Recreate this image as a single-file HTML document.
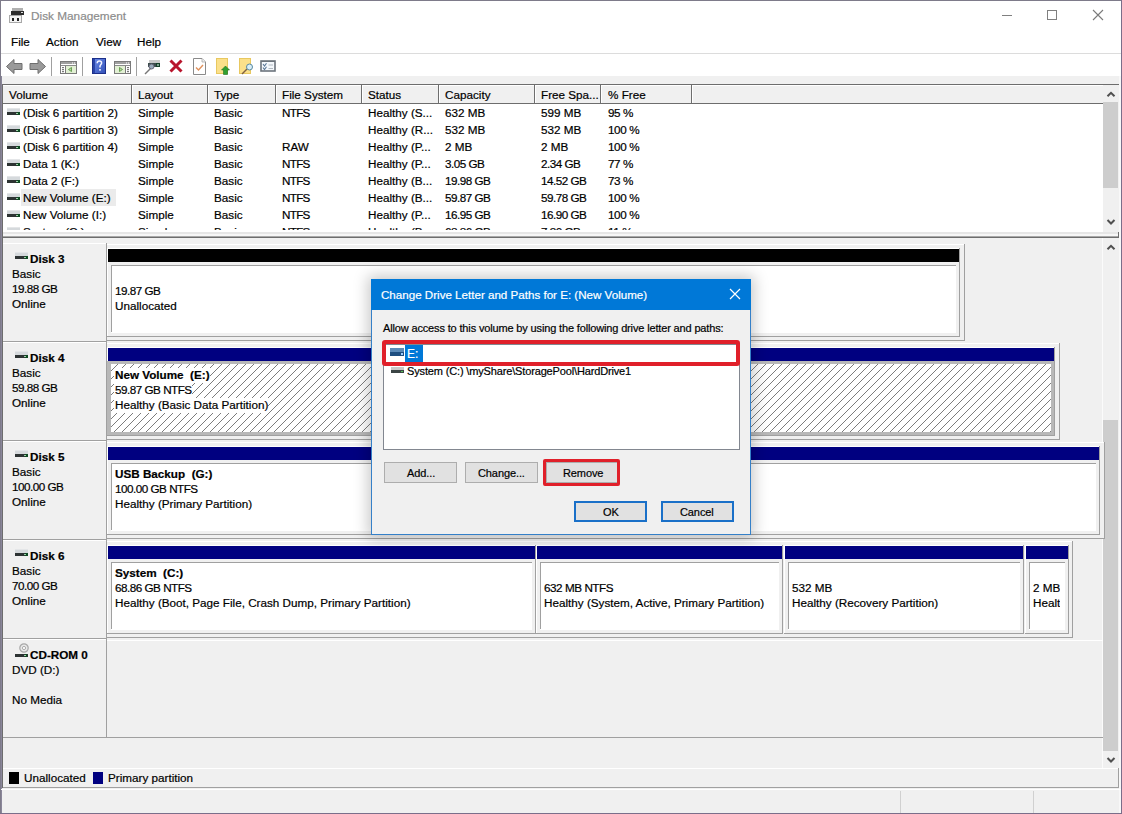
<!DOCTYPE html>
<html><head><meta charset="utf-8"><style>
html,body{margin:0;padding:0;width:1122px;height:814px;overflow:hidden;background:#f0f0f0}
body{position:relative;font-family:"Liberation Sans",sans-serif}
.r{position:absolute;display:block}
.t{position:absolute;white-space:pre;line-height:1;font-family:"Liberation Sans",sans-serif;-webkit-text-stroke:0.2px currentColor}
.hatch{background-color:#fff;background-image:repeating-linear-gradient(-45deg,transparent 0,transparent 4.8px,#6a6a6a 4.8px,#6a6a6a 5.8px)}
</style></head><body>
<div class="r" style="left:0px;top:0px;width:1122px;height:814px;background:#f0f0f0;"></div>
<div class="r" style="left:1px;top:1px;width:1120px;height:75px;background:#ffffff;"></div>
<div class="r" style="left:1px;top:53px;width:1120px;height:1px;background:#dcdcdc;"></div>
<div class="r" style="left:0px;top:0px;width:1122px;height:1px;background:#7e7b8a;"></div>
<div class="r" style="left:0px;top:0px;width:1px;height:814px;background:#7e7b8a;"></div>
<div class="r" style="left:1px;top:76px;width:1px;height:738px;background:#8a869a;"></div>
<div class="r" style="left:1121px;top:0px;width:1px;height:814px;background:#7a6e8a;"></div>
<div class="r" style="left:0px;top:813px;width:1122px;height:1px;background:#7a6e8a;"></div>
<svg class="r" style="left:9px;top:8px" width="16" height="15" viewBox="0 0 16 15">
<rect x="3" y="0" width="11" height="3" fill="#b0b0b0"/>
<rect x="2" y="3" width="13" height="4" fill="#2c2c2c"/>
<rect x="12" y="4" width="2" height="1" fill="#e0e0e0"/>
<rect x="0" y="7" width="13" height="8" fill="#a8a8a8"/>
<rect x="1" y="8" width="11" height="6" fill="#f4f4f4"/>
<rect x="3" y="10" width="2" height="3" fill="#222"/>
<rect x="8" y="10" width="2" height="3" fill="#222"/>
</svg>
<div class="t" style="left:31px;top:10.61px;font-size:11.8px;color:#8c8c8c;">Disk Management</div>
<div class="r" style="left:1002px;top:15px;width:10px;height:1px;background:#808080;"></div>
<div class="r" style="left:1047px;top:10px;width:8px;height:8px;background:transparent;border:1px solid #808080"></div>
<svg class="r" style="left:1092px;top:9px" width="12" height="12" viewBox="0 0 12 12"><path d="M1 1L11 11M11 1L1 11" stroke="#7a7a7a" stroke-width="1.1"/></svg>
<div class="t" style="left:11px;top:36.10px;font-size:11.7px;color:#000;">File</div>
<div class="t" style="left:46px;top:36.10px;font-size:11.7px;color:#000;">Action</div>
<div class="t" style="left:96px;top:36.10px;font-size:11.7px;color:#000;">View</div>
<div class="t" style="left:137px;top:36.10px;font-size:11.7px;color:#000;">Help</div>
<svg class="r" style="left:5px;top:58px" width="42" height="17" viewBox="0 0 42 17">
<path d="M1.5 8.5L9 1.5V5.5H17V11.5H9V15.5Z" fill="#9a9a9a" stroke="#6e6e6e" stroke-width="1"/>
<path d="M40.5 8.5L33 1.5V5.5H25V11.5H33V15.5Z" fill="#9a9a9a" stroke="#6e6e6e" stroke-width="1"/>
</svg>
<div class="r" style="left:51px;top:57px;width:1px;height:19px;background:#a0a0a0;"></div>
<div class="r" style="left:82px;top:57px;width:1px;height:19px;background:#a0a0a0;"></div>
<div class="r" style="left:136px;top:57px;width:1px;height:19px;background:#a0a0a0;"></div>
<svg class="r" style="left:60px;top:61px" width="17" height="13" viewBox="0 0 17 13">
<rect x="0.5" y="0.5" width="16" height="12" fill="#fff" stroke="#7a7a7a"/>
<rect x="1" y="1" width="15" height="2" fill="#a0a0a0"/>
<rect x="12" y="1.5" width="1" height="1" fill="#fff"/><rect x="14" y="1.5" width="1" height="1" fill="#fff"/>
<line x1="1" y1="4.5" x2="16" y2="4.5" stroke="#8a8a8a"/>
<rect x="1" y="5" width="4" height="7" fill="#fff"/><line x1="5.5" y1="5" x2="5.5" y2="12" stroke="#7a7a7a"/><rect x="2" y="6" width="2" height="1.2" fill="#7a7a7a"/><rect x="2" y="8" width="2" height="1.2" fill="#7a7a7a"/><rect x="2" y="10" width="2" height="1.2" fill="#7a7a7a"/><rect x="6" y="5" width="10" height="7" fill="#e2f0d4"/><path d="M11.5 6.5L8.5 8.5L11.5 10.5Z" fill="#b8d8a0" stroke="#5f9848" stroke-width="0.9"/>
</svg>
<svg class="r" style="left:92px;top:58px" width="14" height="16" viewBox="0 0 14 16">
<defs><linearGradient id="hg" x1="0" y1="0" x2="1" y2="1"><stop offset="0" stop-color="#6a8ae8"/><stop offset="1" stop-color="#3452b8"/></linearGradient></defs>
<rect x="0" y="0" width="14" height="16" fill="#1c2f8a"/>
<rect x="1" y="1" width="12" height="14" fill="url(#hg)"/>
<rect x="1" y="1" width="2" height="14" fill="#2a44a8"/>
<path d="M5.2 5.2C5.2 3.6 6.2 3 7.4 3C8.7 3 9.6 3.8 9.6 5C9.6 6.4 8 6.8 8 8.6V9.6" stroke="#f4f4ff" stroke-width="1.5" fill="none"/>
<rect x="7.2" y="11" width="1.6" height="1.7" fill="#f4f4ff"/>
</svg>
<svg class="r" style="left:114px;top:61px" width="17" height="13" viewBox="0 0 17 13">
<rect x="0.5" y="0.5" width="16" height="12" fill="#fff" stroke="#7a7a7a"/>
<rect x="1" y="1" width="15" height="2" fill="#a0a0a0"/>
<rect x="12" y="1.5" width="1" height="1" fill="#fff"/><rect x="14" y="1.5" width="1" height="1" fill="#fff"/>
<line x1="1" y1="4.5" x2="16" y2="4.5" stroke="#8a8a8a"/>
<rect x="12" y="5" width="4" height="7" fill="#fff"/><line x1="11.5" y1="5" x2="11.5" y2="12" stroke="#7a7a7a"/><rect x="13" y="6" width="2" height="1.2" fill="#7a7a7a"/><rect x="13" y="8" width="2" height="1.2" fill="#7a7a7a"/><rect x="13" y="10" width="2" height="1.2" fill="#7a7a7a"/><rect x="1" y="5" width="10" height="7" fill="#e2f0d4"/><path d="M5.5 6.5L8.5 8.5L5.5 10.5Z" fill="#b8d8a0" stroke="#5f9848" stroke-width="0.9"/>
</svg>
<svg class="r" style="left:144px;top:59px" width="17" height="16" viewBox="0 0 17 16">
<rect x="5" y="1" width="11" height="3" fill="#c8c8c8"/>
<rect x="4" y="4" width="12" height="4" fill="#3c4c4c"/>
<rect x="12" y="4" width="4" height="4" fill="#17402a"/><rect x="13" y="5.5" width="2" height="1" fill="#dfe"/>
<path d="M1 15L7 9" stroke="#777" stroke-width="1.5"/>
<circle cx="7.5" cy="7.5" r="2.5" fill="#9ab" stroke="#667" stroke-width="1"/>
</svg>
<svg class="r" style="left:168px;top:58px" width="16" height="16" viewBox="0 0 16 16">
<path d="M2.5 2.5L13.5 13.5M13.5 2.5L2.5 13.5" stroke="#b8142c" stroke-width="3"/>
</svg>
<svg class="r" style="left:193px;top:58px" width="13" height="17" viewBox="0 0 13 17">
<path d="M0.5 0.5H9L12.5 4V16.5H0.5Z" fill="#fff" stroke="#8a8a8a"/><path d="M9 0.5V4H12.5" fill="#eee" stroke="#aaa" stroke-width="0.8"/>
<path d="M3 9.5L5.5 12L10 7" stroke="#e0925e" stroke-width="1.4" fill="none"/>
</svg>
<svg class="r" style="left:216px;top:58px" width="14" height="17" viewBox="0 0 14 17">
<rect x="0" y="0" width="12" height="16" fill="#e8c860"/>
<rect x="1" y="1" width="10" height="14" fill="#fbe08a"/>
<path d="M7.5 16.5V12H5.5L9.5 8L13.5 12H11.5V16.5Z" fill="#30a030" stroke="#207020" stroke-width="0.6"/>
</svg>
<svg class="r" style="left:239px;top:58px" width="15" height="17" viewBox="0 0 15 17">
<rect x="0" y="0" width="12" height="16" fill="#e8c860"/>
<rect x="1" y="1" width="10" height="14" fill="#fbe08a"/>
<path d="M3 16L8 11" stroke="#806040" stroke-width="1.5"/>
<circle cx="10.5" cy="9" r="3" fill="#d8eef8" stroke="#5a8aa0" stroke-width="1"/>
</svg>
<svg class="r" style="left:260px;top:60px" width="16" height="12" viewBox="0 0 16 12">
<rect x="1" y="1" width="14" height="10" fill="#f4f8fc" stroke="#6c747c" stroke-width="1.6"/>
<rect x="1" y="1" width="14" height="1" fill="#6c747c"/>
<path d="M3 4L4.5 6L6.5 3.2M3 7.5L4.5 9.5L6.5 6.7" stroke="#5a7898" stroke-width="1.1" fill="none"/>
<rect x="8.5" y="4.5" width="4.5" height="1" fill="#b0b8c0"/><rect x="8.5" y="8" width="4.5" height="1" fill="#b0b8c0"/>
</svg>
<div class="r" style="left:2px;top:84px;width:1118px;height:1px;background:#6d6d6d;"></div>
<div class="r" style="left:2px;top:84px;width:1px;height:153px;background:#6d6d6d;"></div>
<div class="r" style="left:3px;top:85px;width:1100px;height:147px;background:#ffffff;"></div>
<div class="r" style="left:3px;top:85px;width:1100px;height:18px;background:#f0f0f0;"></div>
<div class="r" style="left:3px;top:103px;width:1100px;height:1px;background:#6d6d6d;"></div>
<div class="r" style="left:3px;top:85px;width:1100px;height:1px;background:#ffffff;"></div>
<div class="r" style="left:131px;top:85px;width:1px;height:18px;background:#6e6e6e;"></div>
<div class="r" style="left:132px;top:86px;width:1px;height:17px;background:#ffffff;"></div>
<div class="r" style="left:207px;top:85px;width:1px;height:18px;background:#6e6e6e;"></div>
<div class="r" style="left:208px;top:86px;width:1px;height:17px;background:#ffffff;"></div>
<div class="r" style="left:275px;top:85px;width:1px;height:18px;background:#6e6e6e;"></div>
<div class="r" style="left:276px;top:86px;width:1px;height:17px;background:#ffffff;"></div>
<div class="r" style="left:361px;top:85px;width:1px;height:18px;background:#6e6e6e;"></div>
<div class="r" style="left:362px;top:86px;width:1px;height:17px;background:#ffffff;"></div>
<div class="r" style="left:438px;top:85px;width:1px;height:18px;background:#6e6e6e;"></div>
<div class="r" style="left:439px;top:86px;width:1px;height:17px;background:#ffffff;"></div>
<div class="r" style="left:534px;top:85px;width:1px;height:18px;background:#6e6e6e;"></div>
<div class="r" style="left:535px;top:86px;width:1px;height:17px;background:#ffffff;"></div>
<div class="r" style="left:600px;top:85px;width:1px;height:18px;background:#6e6e6e;"></div>
<div class="r" style="left:601px;top:86px;width:1px;height:17px;background:#ffffff;"></div>
<div class="r" style="left:691px;top:85px;width:1px;height:18px;background:#6e6e6e;"></div>
<div class="r" style="left:692px;top:86px;width:1px;height:17px;background:#ffffff;"></div>
<div class="t" style="left:9px;top:89.10px;font-size:11.7px;color:#000;">Volume</div>
<div class="t" style="left:138px;top:89.10px;font-size:11.7px;color:#000;">Layout</div>
<div class="t" style="left:214px;top:89.10px;font-size:11.7px;color:#000;">Type</div>
<div class="t" style="left:282px;top:89.10px;font-size:11.7px;color:#000;">File System</div>
<div class="t" style="left:368px;top:89.10px;font-size:11.7px;color:#000;">Status</div>
<div class="t" style="left:445px;top:89.10px;font-size:11.7px;color:#000;">Capacity</div>
<div class="t" style="left:541px;top:89.10px;font-size:11.7px;color:#000;">Free Spa...</div>
<div class="t" style="left:608px;top:89.10px;font-size:11.7px;color:#000;">% Free</div>
<div class="r" style="left:3px;top:104px;width:1100px;height:126px;overflow:hidden">
<svg class="r" style="left:4px;top:4px" width="13" height="7" viewBox="0 0 13 7"><rect x="0" y="0" width="13" height="4" fill="#d5d9dc"/><rect x="0" y="0" width="13" height="1" fill="#e4e6e8"/><rect x="0" y="4" width="13" height="3" fill="#2d3333"/><rect x="10" y="4" width="3" height="3" fill="#0e4a22"/><rect x="9" y="5" width="2" height="1" fill="#9ad4a8"/></svg>
<div class="t" style="left:20px;top:3.10px;font-size:11.7px;color:#000;">(Disk 6 partition 2)</div>
<div class="t" style="left:135px;top:3.10px;font-size:11.7px;color:#000;">Simple</div>
<div class="t" style="left:211px;top:3.10px;font-size:11.7px;color:#000;">Basic</div>
<div class="t" style="left:279px;top:3.10px;font-size:11.7px;color:#000;letter-spacing:-0.7px;">NTFS</div>
<div class="t" style="left:365px;top:3.10px;font-size:11.7px;color:#000;">Healthy (S...</div>
<div class="t" style="left:442px;top:3.10px;font-size:11.7px;color:#000;">632 MB</div>
<div class="t" style="left:538px;top:3.10px;font-size:11.7px;color:#000;">599 MB</div>
<div class="t" style="left:605px;top:3.10px;font-size:11.7px;color:#000;letter-spacing:-0.4px;">95 %</div>
<svg class="r" style="left:4px;top:21px" width="13" height="7" viewBox="0 0 13 7"><rect x="0" y="0" width="13" height="4" fill="#d5d9dc"/><rect x="0" y="0" width="13" height="1" fill="#e4e6e8"/><rect x="0" y="4" width="13" height="3" fill="#2d3333"/><rect x="10" y="4" width="3" height="3" fill="#0e4a22"/><rect x="9" y="5" width="2" height="1" fill="#9ad4a8"/></svg>
<div class="t" style="left:20px;top:20.10px;font-size:11.7px;color:#000;">(Disk 6 partition 3)</div>
<div class="t" style="left:135px;top:20.10px;font-size:11.7px;color:#000;">Simple</div>
<div class="t" style="left:211px;top:20.10px;font-size:11.7px;color:#000;">Basic</div>
<div class="t" style="left:279px;top:20.10px;font-size:11.7px;color:#000;"></div>
<div class="t" style="left:365px;top:20.10px;font-size:11.7px;color:#000;">Healthy (R...</div>
<div class="t" style="left:442px;top:20.10px;font-size:11.7px;color:#000;">532 MB</div>
<div class="t" style="left:538px;top:20.10px;font-size:11.7px;color:#000;">532 MB</div>
<div class="t" style="left:605px;top:20.10px;font-size:11.7px;color:#000;letter-spacing:-0.4px;">100 %</div>
<svg class="r" style="left:4px;top:38px" width="13" height="7" viewBox="0 0 13 7"><rect x="0" y="0" width="13" height="4" fill="#d5d9dc"/><rect x="0" y="0" width="13" height="1" fill="#e4e6e8"/><rect x="0" y="4" width="13" height="3" fill="#2d3333"/><rect x="10" y="4" width="3" height="3" fill="#0e4a22"/><rect x="9" y="5" width="2" height="1" fill="#9ad4a8"/></svg>
<div class="t" style="left:20px;top:37.10px;font-size:11.7px;color:#000;">(Disk 6 partition 4)</div>
<div class="t" style="left:135px;top:37.10px;font-size:11.7px;color:#000;">Simple</div>
<div class="t" style="left:211px;top:37.10px;font-size:11.7px;color:#000;">Basic</div>
<div class="t" style="left:279px;top:37.10px;font-size:11.7px;color:#000;">RAW</div>
<div class="t" style="left:365px;top:37.10px;font-size:11.7px;color:#000;">Healthy (P...</div>
<div class="t" style="left:442px;top:37.10px;font-size:11.7px;color:#000;">2 MB</div>
<div class="t" style="left:538px;top:37.10px;font-size:11.7px;color:#000;">2 MB</div>
<div class="t" style="left:605px;top:37.10px;font-size:11.7px;color:#000;letter-spacing:-0.4px;">100 %</div>
<svg class="r" style="left:4px;top:55px" width="13" height="7" viewBox="0 0 13 7"><rect x="0" y="0" width="13" height="4" fill="#d5d9dc"/><rect x="0" y="0" width="13" height="1" fill="#e4e6e8"/><rect x="0" y="4" width="13" height="3" fill="#2d3333"/><rect x="10" y="4" width="3" height="3" fill="#0e4a22"/><rect x="9" y="5" width="2" height="1" fill="#9ad4a8"/></svg>
<div class="t" style="left:20px;top:54.10px;font-size:11.7px;color:#000;">Data 1 (K:)</div>
<div class="t" style="left:135px;top:54.10px;font-size:11.7px;color:#000;">Simple</div>
<div class="t" style="left:211px;top:54.10px;font-size:11.7px;color:#000;">Basic</div>
<div class="t" style="left:279px;top:54.10px;font-size:11.7px;color:#000;letter-spacing:-0.7px;">NTFS</div>
<div class="t" style="left:365px;top:54.10px;font-size:11.7px;color:#000;">Healthy (P...</div>
<div class="t" style="left:442px;top:54.10px;font-size:11.7px;color:#000;letter-spacing:-0.5px;">3.05 GB</div>
<div class="t" style="left:538px;top:54.10px;font-size:11.7px;color:#000;letter-spacing:-0.5px;">2.34 GB</div>
<div class="t" style="left:605px;top:54.10px;font-size:11.7px;color:#000;letter-spacing:-0.4px;">77 %</div>
<svg class="r" style="left:4px;top:72px" width="13" height="7" viewBox="0 0 13 7"><rect x="0" y="0" width="13" height="4" fill="#d5d9dc"/><rect x="0" y="0" width="13" height="1" fill="#e4e6e8"/><rect x="0" y="4" width="13" height="3" fill="#2d3333"/><rect x="10" y="4" width="3" height="3" fill="#0e4a22"/><rect x="9" y="5" width="2" height="1" fill="#9ad4a8"/></svg>
<div class="t" style="left:20px;top:71.10px;font-size:11.7px;color:#000;">Data 2 (F:)</div>
<div class="t" style="left:135px;top:71.10px;font-size:11.7px;color:#000;">Simple</div>
<div class="t" style="left:211px;top:71.10px;font-size:11.7px;color:#000;">Basic</div>
<div class="t" style="left:279px;top:71.10px;font-size:11.7px;color:#000;letter-spacing:-0.7px;">NTFS</div>
<div class="t" style="left:365px;top:71.10px;font-size:11.7px;color:#000;">Healthy (B...</div>
<div class="t" style="left:442px;top:71.10px;font-size:11.7px;color:#000;letter-spacing:-0.5px;">19.98 GB</div>
<div class="t" style="left:538px;top:71.10px;font-size:11.7px;color:#000;letter-spacing:-0.5px;">14.52 GB</div>
<div class="t" style="left:605px;top:71.10px;font-size:11.7px;color:#000;letter-spacing:-0.4px;">73 %</div>
<div class="r" style="left:18px;top:85px;width:95px;height:17px;background:#ebebeb;"></div>
<svg class="r" style="left:4px;top:89px" width="13" height="7" viewBox="0 0 13 7"><rect x="0" y="0" width="13" height="4" fill="#d5d9dc"/><rect x="0" y="0" width="13" height="1" fill="#e4e6e8"/><rect x="0" y="4" width="13" height="3" fill="#2d3333"/><rect x="10" y="4" width="3" height="3" fill="#0e4a22"/><rect x="9" y="5" width="2" height="1" fill="#9ad4a8"/></svg>
<div class="t" style="left:20px;top:88.10px;font-size:11.7px;color:#000;">New Volume (E:)</div>
<div class="t" style="left:135px;top:88.10px;font-size:11.7px;color:#000;">Simple</div>
<div class="t" style="left:211px;top:88.10px;font-size:11.7px;color:#000;">Basic</div>
<div class="t" style="left:279px;top:88.10px;font-size:11.7px;color:#000;letter-spacing:-0.7px;">NTFS</div>
<div class="t" style="left:365px;top:88.10px;font-size:11.7px;color:#000;">Healthy (B...</div>
<div class="t" style="left:442px;top:88.10px;font-size:11.7px;color:#000;letter-spacing:-0.5px;">59.87 GB</div>
<div class="t" style="left:538px;top:88.10px;font-size:11.7px;color:#000;letter-spacing:-0.5px;">59.78 GB</div>
<div class="t" style="left:605px;top:88.10px;font-size:11.7px;color:#000;letter-spacing:-0.4px;">100 %</div>
<svg class="r" style="left:4px;top:106px" width="13" height="7" viewBox="0 0 13 7"><rect x="0" y="0" width="13" height="4" fill="#d5d9dc"/><rect x="0" y="0" width="13" height="1" fill="#e4e6e8"/><rect x="0" y="4" width="13" height="3" fill="#2d3333"/><rect x="10" y="4" width="3" height="3" fill="#0e4a22"/><rect x="9" y="5" width="2" height="1" fill="#9ad4a8"/></svg>
<div class="t" style="left:20px;top:105.10px;font-size:11.7px;color:#000;">New Volume (I:)</div>
<div class="t" style="left:135px;top:105.10px;font-size:11.7px;color:#000;">Simple</div>
<div class="t" style="left:211px;top:105.10px;font-size:11.7px;color:#000;">Basic</div>
<div class="t" style="left:279px;top:105.10px;font-size:11.7px;color:#000;letter-spacing:-0.7px;">NTFS</div>
<div class="t" style="left:365px;top:105.10px;font-size:11.7px;color:#000;">Healthy (P...</div>
<div class="t" style="left:442px;top:105.10px;font-size:11.7px;color:#000;letter-spacing:-0.5px;">16.95 GB</div>
<div class="t" style="left:538px;top:105.10px;font-size:11.7px;color:#000;letter-spacing:-0.5px;">16.90 GB</div>
<div class="t" style="left:605px;top:105.10px;font-size:11.7px;color:#000;letter-spacing:-0.4px;">100 %</div>
<svg class="r" style="left:4px;top:123px" width="13" height="7" viewBox="0 0 13 7"><rect x="0" y="0" width="13" height="4" fill="#d5d9dc"/><rect x="0" y="0" width="13" height="1" fill="#e4e6e8"/><rect x="0" y="4" width="13" height="3" fill="#2d3333"/><rect x="10" y="4" width="3" height="3" fill="#0e4a22"/><rect x="9" y="5" width="2" height="1" fill="#9ad4a8"/></svg>
<div class="t" style="left:20px;top:122.10px;font-size:11.7px;color:#000;">System (C:)</div>
<div class="t" style="left:135px;top:122.10px;font-size:11.7px;color:#000;">Simple</div>
<div class="t" style="left:211px;top:122.10px;font-size:11.7px;color:#000;">Basic</div>
<div class="t" style="left:279px;top:122.10px;font-size:11.7px;color:#000;letter-spacing:-0.7px;">NTFS</div>
<div class="t" style="left:365px;top:122.10px;font-size:11.7px;color:#000;">Healthy (B...</div>
<div class="t" style="left:442px;top:122.10px;font-size:11.7px;color:#000;letter-spacing:-0.5px;">68.86 GB</div>
<div class="t" style="left:538px;top:122.10px;font-size:11.7px;color:#000;letter-spacing:-0.5px;">7.30 GB</div>
<div class="t" style="left:605px;top:122.10px;font-size:11.7px;color:#000;letter-spacing:-0.4px;">11 %</div>
</div>
<div class="r" style="left:1103px;top:85px;width:16px;height:147px;background:#f0f0f0;"></div>
<div class="r" style="left:1103px;top:102px;width:15px;height:86px;background:#cdcdcd;"></div>
<svg class="r" style="left:1106px;top:90px" width="10" height="8" viewBox="0 0 10 8"><path d="M1.5 6.3L5 2.8L8.5 6.3" stroke="#505050" stroke-width="2" fill="none"/></svg>
<svg class="r" style="left:1106px;top:218px" width="10" height="8" viewBox="0 0 10 8"><path d="M1.5 2L5 5.5L8.5 2" stroke="#505050" stroke-width="2" fill="none"/></svg>
<div class="r" style="left:3px;top:232px;width:1116px;height:2px;background:#e6e6e6;"></div>
<div class="r" style="left:3px;top:234px;width:1116px;height:2px;background:#f6f6f6;"></div>
<div class="r" style="left:3px;top:236px;width:1116px;height:1px;background:#a8a8a8;"></div>
<div class="r" style="left:1118px;top:232px;width:1px;height:5px;background:#6d6d6d;"></div>
<div class="r" style="left:2px;top:237px;width:1118px;height:1px;background:#6d6d6d;"></div>
<div class="r" style="left:2px;top:237px;width:1px;height:551px;background:#6d6d6d;"></div>
<div class="r" style="left:1103px;top:238px;width:16px;height:530px;background:#f0f0f0;"></div>
<div class="r" style="left:1102px;top:238px;width:1px;height:530px;background:#fbfbfb;"></div>
<div class="r" style="left:1119px;top:76px;width:2px;height:737px;background:#f8f8f8;"></div>
<div class="r" style="left:1103px;top:420px;width:15px;height:331px;background:#cdcdcd;"></div>
<svg class="r" style="left:1106px;top:243px" width="10" height="8" viewBox="0 0 10 8"><path d="M1.5 6.3L5 2.8L8.5 6.3" stroke="#505050" stroke-width="2" fill="none"/></svg>
<svg class="r" style="left:1106px;top:756px" width="10" height="8" viewBox="0 0 10 8"><path d="M1.5 2L5 5.5L8.5 2" stroke="#505050" stroke-width="2" fill="none"/></svg>
<div class="r" style="left:3px;top:243px;width:103px;height:1px;background:#ffffff;"></div>
<div class="r" style="left:3px;top:341px;width:104px;height:1px;background:#a0a0a0;"></div>
<div class="r" style="left:106px;top:243px;width:1px;height:99px;background:#a0a0a0;"></div>
<svg class="r" style="left:15px;top:252px" width="13" height="7" viewBox="0 0 13 7"><rect x="0" y="0" width="13" height="4" fill="#d5d9dc"/><rect x="0" y="0" width="13" height="1" fill="#e4e6e8"/><rect x="0" y="4" width="13" height="3" fill="#2d3333"/><rect x="10" y="4" width="3" height="3" fill="#0e4a22"/><rect x="9" y="5" width="2" height="1" fill="#9ad4a8"/></svg>
<div class="t" style="left:30px;top:253.10px;font-size:11.7px;color:#000;font-weight:700;">Disk 3</div>
<div class="t" style="left:12px;top:268.10px;font-size:11.7px;color:#000;">Basic</div>
<div class="t" style="left:12px;top:283.10px;font-size:11.7px;color:#000;letter-spacing:-0.5px;">19.88 GB</div>
<div class="t" style="left:12px;top:298.10px;font-size:11.7px;color:#000;">Online</div>
<div class="r" style="left:107px;top:244px;width:857px;height:97px;background:#f0f0f0;"></div>
<div class="r" style="left:107px;top:244px;width:857px;height:1px;background:#ffffff;"></div>
<div class="r" style="left:964px;top:244px;width:1px;height:97px;background:#a0a0a0;"></div>
<div class="r" style="left:107px;top:340px;width:858px;height:1px;background:#a0a0a0;"></div>
<div class="r" style="left:107px;top:248px;width:852px;height:1px;background:#ffffff;"></div>
<div class="r" style="left:107px;top:248px;width:1px;height:89px;background:#ffffff;"></div>
<div class="r" style="left:959px;top:248px;width:1px;height:89px;background:#a0a0a0;"></div>
<div class="r" style="left:107px;top:336px;width:853px;height:1px;background:#a0a0a0;"></div>
<div class="r" style="left:108px;top:249px;width:851px;height:13px;background:#000000;"></div>
<div class="r" style="left:111px;top:265px;width:845px;height:68px;background:#ffffff;"></div>
<div class="r" style="left:111px;top:265px;width:845px;height:1px;background:#a0a0a0;"></div>
<div class="r" style="left:111px;top:265px;width:1px;height:67px;background:#a0a0a0;"></div>
<div class="r" style="left:113px;top:266px;width:838px;height:66px;overflow:hidden">
<div class="t" style="left:2px;top:19.10px;font-size:11.7px;color:#000;letter-spacing:-0.5px;">19.87 GB</div>
<div class="t" style="left:2px;top:34.10px;font-size:11.7px;color:#000;">Unallocated</div>
</div>
<div class="r" style="left:3px;top:342px;width:103px;height:1px;background:#ffffff;"></div>
<div class="r" style="left:3px;top:440px;width:104px;height:1px;background:#a0a0a0;"></div>
<div class="r" style="left:106px;top:342px;width:1px;height:99px;background:#a0a0a0;"></div>
<svg class="r" style="left:15px;top:351px" width="13" height="7" viewBox="0 0 13 7"><rect x="0" y="0" width="13" height="4" fill="#d5d9dc"/><rect x="0" y="0" width="13" height="1" fill="#e4e6e8"/><rect x="0" y="4" width="13" height="3" fill="#2d3333"/><rect x="10" y="4" width="3" height="3" fill="#0e4a22"/><rect x="9" y="5" width="2" height="1" fill="#9ad4a8"/></svg>
<div class="t" style="left:30px;top:352.10px;font-size:11.7px;color:#000;font-weight:700;">Disk 4</div>
<div class="t" style="left:12px;top:367.10px;font-size:11.7px;color:#000;">Basic</div>
<div class="t" style="left:12px;top:382.10px;font-size:11.7px;color:#000;letter-spacing:-0.5px;">59.88 GB</div>
<div class="t" style="left:12px;top:397.10px;font-size:11.7px;color:#000;">Online</div>
<div class="r" style="left:107px;top:343px;width:952px;height:97px;background:#f0f0f0;"></div>
<div class="r" style="left:107px;top:343px;width:952px;height:1px;background:#ffffff;"></div>
<div class="r" style="left:1059px;top:343px;width:1px;height:97px;background:#a0a0a0;"></div>
<div class="r" style="left:107px;top:439px;width:953px;height:1px;background:#a0a0a0;"></div>
<div class="r" style="left:107px;top:347px;width:947px;height:1px;background:#ffffff;"></div>
<div class="r" style="left:107px;top:347px;width:1px;height:89px;background:#ffffff;"></div>
<div class="r" style="left:1054px;top:347px;width:1px;height:89px;background:#a0a0a0;"></div>
<div class="r" style="left:107px;top:435px;width:948px;height:1px;background:#a0a0a0;"></div>
<div class="r" style="left:108px;top:348px;width:946px;height:13px;background:#000080;"></div>
<div class="r" style="left:107px;top:361px;width:947px;height:74px;background:#b8b8b8;"></div>
<svg class="r" style="left:111px;top:364px" width="940" height="68"><defs><pattern id="hp" x="0" y="7" width="8" height="8" patternUnits="userSpaceOnUse"><rect width="8" height="8" fill="#fff"/><rect x="0" y="7" width="1" height="1" fill="#7c7c7c"/><rect x="1" y="6" width="1" height="1" fill="#7c7c7c"/><rect x="2" y="5" width="1" height="1" fill="#7c7c7c"/><rect x="3" y="4" width="1" height="1" fill="#7c7c7c"/><rect x="4" y="3" width="1" height="1" fill="#7c7c7c"/><rect x="5" y="2" width="1" height="1" fill="#7c7c7c"/><rect x="6" y="1" width="1" height="1" fill="#7c7c7c"/><rect x="7" y="0" width="1" height="1" fill="#7c7c7c"/></pattern></defs><rect width="100%" height="100%" fill="url(#hp)"/></svg>
<div class="r" style="left:113px;top:365px;width:933px;height:66px;overflow:hidden">
<div class="t" style="left:2px;top:4.10px;font-size:11.7px;color:#000;font-weight:700;background:#fff;padding:1.6px 0 2.6px 1px;margin:-1.6px 0 0 -1px;">New Volume  (E:)</div>
<div class="t" style="left:2px;top:19.10px;font-size:11.7px;color:#000;letter-spacing:-0.5px;background:#fff;padding:1.6px 0 2.6px 1px;margin:-1.6px 0 0 -1px;">59.87 GB NTFS</div>
<div class="t" style="left:2px;top:34.10px;font-size:11.7px;color:#000;background:#fff;padding:1.6px 0 2.6px 1px;margin:-1.6px 0 0 -1px;">Healthy (Basic Data Partition)</div>
</div>
<div class="r" style="left:3px;top:441px;width:103px;height:1px;background:#ffffff;"></div>
<div class="r" style="left:3px;top:539px;width:104px;height:1px;background:#a0a0a0;"></div>
<div class="r" style="left:106px;top:441px;width:1px;height:99px;background:#a0a0a0;"></div>
<svg class="r" style="left:15px;top:450px" width="13" height="7" viewBox="0 0 13 7"><rect x="0" y="0" width="13" height="4" fill="#d5d9dc"/><rect x="0" y="0" width="13" height="1" fill="#e4e6e8"/><rect x="0" y="4" width="13" height="3" fill="#2d3333"/><rect x="10" y="4" width="3" height="3" fill="#0e4a22"/><rect x="9" y="5" width="2" height="1" fill="#9ad4a8"/></svg>
<div class="t" style="left:30px;top:451.10px;font-size:11.7px;color:#000;font-weight:700;">Disk 5</div>
<div class="t" style="left:12px;top:466.10px;font-size:11.7px;color:#000;">Basic</div>
<div class="t" style="left:12px;top:481.10px;font-size:11.7px;color:#000;letter-spacing:-0.5px;">100.00 GB</div>
<div class="t" style="left:12px;top:496.10px;font-size:11.7px;color:#000;">Online</div>
<div class="r" style="left:107px;top:442px;width:997px;height:97px;background:#f0f0f0;"></div>
<div class="r" style="left:107px;top:442px;width:997px;height:1px;background:#ffffff;"></div>
<div class="r" style="left:1104px;top:442px;width:1px;height:97px;background:#a0a0a0;"></div>
<div class="r" style="left:107px;top:538px;width:998px;height:1px;background:#a0a0a0;"></div>
<div class="r" style="left:107px;top:446px;width:992px;height:1px;background:#ffffff;"></div>
<div class="r" style="left:107px;top:446px;width:1px;height:89px;background:#ffffff;"></div>
<div class="r" style="left:1099px;top:446px;width:1px;height:89px;background:#a0a0a0;"></div>
<div class="r" style="left:107px;top:534px;width:993px;height:1px;background:#a0a0a0;"></div>
<div class="r" style="left:108px;top:447px;width:991px;height:13px;background:#000080;"></div>
<div class="r" style="left:111px;top:463px;width:985px;height:68px;background:#ffffff;"></div>
<div class="r" style="left:111px;top:463px;width:985px;height:1px;background:#a0a0a0;"></div>
<div class="r" style="left:111px;top:463px;width:1px;height:67px;background:#a0a0a0;"></div>
<div class="r" style="left:113px;top:464px;width:978px;height:66px;overflow:hidden">
<div class="t" style="left:2px;top:4.10px;font-size:11.7px;color:#000;font-weight:700;">USB Backup  (G:)</div>
<div class="t" style="left:2px;top:19.10px;font-size:11.7px;color:#000;letter-spacing:-0.5px;">100.00 GB NTFS</div>
<div class="t" style="left:2px;top:34.10px;font-size:11.7px;color:#000;">Healthy (Primary Partition)</div>
</div>
<div class="r" style="left:3px;top:540px;width:103px;height:1px;background:#ffffff;"></div>
<div class="r" style="left:3px;top:638px;width:104px;height:1px;background:#a0a0a0;"></div>
<div class="r" style="left:106px;top:540px;width:1px;height:99px;background:#a0a0a0;"></div>
<svg class="r" style="left:15px;top:549px" width="13" height="7" viewBox="0 0 13 7"><rect x="0" y="0" width="13" height="4" fill="#d5d9dc"/><rect x="0" y="0" width="13" height="1" fill="#e4e6e8"/><rect x="0" y="4" width="13" height="3" fill="#2d3333"/><rect x="10" y="4" width="3" height="3" fill="#0e4a22"/><rect x="9" y="5" width="2" height="1" fill="#9ad4a8"/></svg>
<div class="t" style="left:30px;top:550.10px;font-size:11.7px;color:#000;font-weight:700;">Disk 6</div>
<div class="t" style="left:12px;top:565.10px;font-size:11.7px;color:#000;">Basic</div>
<div class="t" style="left:12px;top:580.10px;font-size:11.7px;color:#000;letter-spacing:-0.5px;">70.00 GB</div>
<div class="t" style="left:12px;top:595.10px;font-size:11.7px;color:#000;">Online</div>
<div class="r" style="left:107px;top:541px;width:965px;height:97px;background:#f0f0f0;"></div>
<div class="r" style="left:107px;top:541px;width:965px;height:1px;background:#ffffff;"></div>
<div class="r" style="left:1072px;top:541px;width:1px;height:97px;background:#a0a0a0;"></div>
<div class="r" style="left:107px;top:637px;width:966px;height:1px;background:#a0a0a0;"></div>
<div class="r" style="left:107px;top:545px;width:428px;height:1px;background:#ffffff;"></div>
<div class="r" style="left:107px;top:545px;width:1px;height:89px;background:#ffffff;"></div>
<div class="r" style="left:535px;top:545px;width:1px;height:89px;background:#a0a0a0;"></div>
<div class="r" style="left:107px;top:633px;width:429px;height:1px;background:#a0a0a0;"></div>
<div class="r" style="left:108px;top:546px;width:427px;height:13px;background:#000080;"></div>
<div class="r" style="left:111px;top:562px;width:421px;height:68px;background:#ffffff;"></div>
<div class="r" style="left:111px;top:562px;width:421px;height:1px;background:#a0a0a0;"></div>
<div class="r" style="left:111px;top:562px;width:1px;height:67px;background:#a0a0a0;"></div>
<div class="r" style="left:113px;top:563px;width:414px;height:66px;overflow:hidden">
<div class="t" style="left:2px;top:4.10px;font-size:11.7px;color:#000;font-weight:700;">System  (C:)</div>
<div class="t" style="left:2px;top:19.10px;font-size:11.7px;color:#000;letter-spacing:-0.5px;">68.86 GB NTFS</div>
<div class="t" style="left:2px;top:34.10px;font-size:11.7px;color:#000;">Healthy (Boot, Page File, Crash Dump, Primary Partition)</div>
</div>
<div class="r" style="left:536px;top:545px;width:246px;height:1px;background:#ffffff;"></div>
<div class="r" style="left:536px;top:545px;width:1px;height:89px;background:#ffffff;"></div>
<div class="r" style="left:782px;top:545px;width:1px;height:89px;background:#a0a0a0;"></div>
<div class="r" style="left:536px;top:633px;width:247px;height:1px;background:#a0a0a0;"></div>
<div class="r" style="left:537px;top:546px;width:245px;height:13px;background:#000080;"></div>
<div class="r" style="left:540px;top:562px;width:239px;height:68px;background:#ffffff;"></div>
<div class="r" style="left:540px;top:562px;width:239px;height:1px;background:#a0a0a0;"></div>
<div class="r" style="left:540px;top:562px;width:1px;height:67px;background:#a0a0a0;"></div>
<div class="r" style="left:542px;top:563px;width:232px;height:66px;overflow:hidden">
<div class="t" style="left:2px;top:19.10px;font-size:11.7px;color:#000;letter-spacing:-0.45px;">632 MB NTFS</div>
<div class="t" style="left:2px;top:34.10px;font-size:11.7px;color:#000;">Healthy (System, Active, Primary Partition)</div>
</div>
<div class="r" style="left:784px;top:545px;width:239px;height:1px;background:#ffffff;"></div>
<div class="r" style="left:784px;top:545px;width:1px;height:89px;background:#ffffff;"></div>
<div class="r" style="left:1023px;top:545px;width:1px;height:89px;background:#a0a0a0;"></div>
<div class="r" style="left:784px;top:633px;width:240px;height:1px;background:#a0a0a0;"></div>
<div class="r" style="left:785px;top:546px;width:238px;height:13px;background:#000080;"></div>
<div class="r" style="left:788px;top:562px;width:232px;height:68px;background:#ffffff;"></div>
<div class="r" style="left:788px;top:562px;width:232px;height:1px;background:#a0a0a0;"></div>
<div class="r" style="left:788px;top:562px;width:1px;height:67px;background:#a0a0a0;"></div>
<div class="r" style="left:790px;top:563px;width:225px;height:66px;overflow:hidden">
<div class="t" style="left:2px;top:19.10px;font-size:11.7px;color:#000;">532 MB</div>
<div class="t" style="left:2px;top:34.10px;font-size:11.7px;color:#000;">Healthy (Recovery Partition)</div>
</div>
<div class="r" style="left:1025px;top:545px;width:43px;height:1px;background:#ffffff;"></div>
<div class="r" style="left:1025px;top:545px;width:1px;height:89px;background:#ffffff;"></div>
<div class="r" style="left:1068px;top:545px;width:1px;height:89px;background:#a0a0a0;"></div>
<div class="r" style="left:1025px;top:633px;width:44px;height:1px;background:#a0a0a0;"></div>
<div class="r" style="left:1026px;top:546px;width:42px;height:13px;background:#000080;"></div>
<div class="r" style="left:1029px;top:562px;width:36px;height:68px;background:#ffffff;"></div>
<div class="r" style="left:1029px;top:562px;width:36px;height:1px;background:#a0a0a0;"></div>
<div class="r" style="left:1029px;top:562px;width:1px;height:67px;background:#a0a0a0;"></div>
<div class="r" style="left:1031px;top:563px;width:29px;height:66px;overflow:hidden">
<div class="t" style="left:2px;top:19.10px;font-size:11.7px;color:#000;">2 MB</div>
<div class="t" style="left:2px;top:34.10px;font-size:11.7px;color:#000;">Healthy (Recovery Partition)</div>
</div>
<div class="r" style="left:3px;top:639px;width:103px;height:1px;background:#ffffff;"></div>
<div class="r" style="left:3px;top:737px;width:104px;height:1px;background:#a0a0a0;"></div>
<div class="r" style="left:106px;top:639px;width:1px;height:99px;background:#a0a0a0;"></div>
<div class="r" style="left:107px;top:737px;width:996px;height:1px;background:#a0a0a0;"></div>
<div class="r" style="left:107px;top:640px;width:996px;height:1px;background:#ffffff;"></div>
<svg class="r" style="left:14px;top:642px" width="16" height="16" viewBox="0 0 16 16"><circle cx="10" cy="6" r="4.2" fill="#e8e8e8" stroke="#a8a8a8" stroke-width="1.2"/><circle cx="10" cy="6" r="1.6" fill="#fff" stroke="#9a9a9a" stroke-width="0.8"/><rect x="1" y="12" width="13" height="3" fill="#2d3333"/><rect x="11" y="12" width="2" height="3" fill="#0e4a22"/><rect x="10" y="13" width="2" height="1" fill="#9ad4a8"/></svg>
<div class="t" style="left:30px;top:649.10px;font-size:11.7px;color:#000;font-weight:700;">CD-ROM 0</div>
<div class="t" style="left:12px;top:664.10px;font-size:11.7px;color:#000;">DVD (D:)</div>
<div class="t" style="left:12px;top:694.10px;font-size:11.7px;color:#000;">No Media</div>
<div class="r" style="left:3px;top:768px;width:1116px;height:1px;background:#ffffff;"></div>
<div class="r" style="left:3px;top:787px;width:1116px;height:1px;background:#a0a0a0;"></div>
<div class="r" style="left:1118px;top:768px;width:1px;height:20px;background:#a0a0a0;"></div>
<div class="r" style="left:9px;top:772px;width:10px;height:12px;background:#000000;"></div>
<div class="t" style="left:24px;top:772.10px;font-size:11.7px;color:#000;">Unallocated</div>
<div class="r" style="left:93px;top:772px;width:10px;height:12px;background:#000080;"></div>
<div class="t" style="left:108px;top:772.10px;font-size:11.7px;color:#000;">Primary partition</div>
<div class="r" style="left:1px;top:789px;width:1120px;height:1px;background:#ffffff;"></div>
<div class="r" style="left:900px;top:791px;width:1px;height:22px;background:#d0d0d0;"></div>
<div class="r" style="left:1033px;top:791px;width:1px;height:22px;background:#d0d0d0;"></div>
<div class="r" style="left:371px;top:279px;width:380px;height:256px;box-shadow:0 0 14px 3px rgba(0,0,0,0.22)"></div>
<div class="r" style="left:371px;top:279px;width:380px;height:256px;background:#f0f0f0;box-sizing:border-box;border:1px solid #3580c8"></div>
<div class="r" style="left:371px;top:279px;width:380px;height:31px;background:#0078d7;"></div>
<div class="t" style="left:381px;top:289.18px;font-size:11.6px;color:#ffffff;">Change Drive Letter and Paths for E: (New Volume)</div>
<svg class="r" style="left:729px;top:288px" width="12" height="12" viewBox="0 0 12 12"><path d="M1 1L11 11M11 1L1 11" stroke="#ffffff" stroke-width="1.2"/></svg>
<div class="t" style="left:383px;top:322.69px;font-size:11px;color:#000;letter-spacing:-0.15px;">Allow access to this volume by using the following drive letter and paths:</div>
<div class="r" style="left:383px;top:344px;width:357px;height:106px;background:#ffffff;box-sizing:border-box;border:1px solid #828790"></div>
<svg class="r" style="left:390px;top:348px" width="14" height="9" viewBox="0 0 14 9"><rect x="0" y="0" width="14" height="4" fill="#5a8ab8"/><rect x="0" y="4" width="14" height="4" fill="#1e4e80"/><rect x="11" y="5" width="2" height="2" fill="#9cf"/></svg>
<div class="r" style="left:405px;top:345px;width:18px;height:17px;background:#0078d7;"></div>
<div class="t" style="left:407px;top:347.84px;font-size:12px;color:#fff;">E:</div>
<svg class="r" style="left:391px;top:367px" width="13" height="7" viewBox="0 0 13 7"><rect x="0" y="0" width="13" height="3" fill="#c9c9c9"/><rect x="0" y="3" width="13" height="3" fill="#3b4545"/><rect x="10" y="4" width="2" height="1" fill="#56c056"/></svg>
<div class="t" style="left:407px;top:365.69px;font-size:11px;color:#000;letter-spacing:-0.15px;">System (C:) \myShare\StoragePool\HardDrive1</div>
<div class="r" style="left:382px;top:340px;width:358px;height:26px;background:transparent;box-sizing:border-box;border:4px solid #e0202a;border-radius:3px"></div>
<div class="r" style="left:384px;top:462px;width:73px;height:21px;background:#e1e1e1;box-sizing:border-box;border:1px solid #adadad"></div>
<div class="t" style="left:407px;top:467.69px;font-size:11px;color:#000;letter-spacing:-0.1px;">Add...</div>
<div class="r" style="left:465px;top:462px;width:73px;height:21px;background:#e1e1e1;box-sizing:border-box;border:1px solid #adadad"></div>
<div class="t" style="left:478px;top:467.69px;font-size:11px;color:#000;letter-spacing:-0.1px;">Change...</div>
<div class="r" style="left:546px;top:462px;width:72px;height:21px;background:#e1e1e1;box-sizing:border-box;border:1px solid #adadad"></div>
<div class="t" style="left:563px;top:467.69px;font-size:11px;color:#000;letter-spacing:-0.1px;">Remove</div>
<div class="r" style="left:543px;top:459px;width:77px;height:27px;background:transparent;box-sizing:border-box;border:3.6px solid #e0202a;border-radius:2px"></div>
<div class="r" style="left:574px;top:501px;width:73px;height:21px;background:#e1e1e1;box-sizing:border-box;border:2px solid #1a70c8"></div>
<div class="t" style="left:603px;top:506.69px;font-size:11px;color:#000;letter-spacing:-0.1px;">OK</div>
<div class="r" style="left:661px;top:501px;width:73px;height:21px;background:#e1e1e1;box-sizing:border-box;border:2px solid #1a70c8"></div>
<div class="t" style="left:680px;top:506.69px;font-size:11px;color:#000;letter-spacing:-0.1px;">Cancel</div>
</body></html>
